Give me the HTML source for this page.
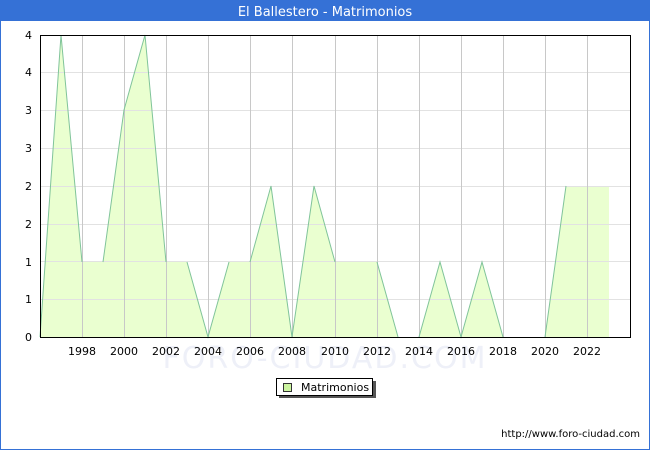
<!DOCTYPE html>
<html><head><meta charset="utf-8"><style>
body{margin:0;width:650px;height:450px;overflow:hidden;background:#fff;font-family:"DejaVu Sans","Liberation Sans",sans-serif}
</style></head><body>
<svg width="650" height="450" xmlns="http://www.w3.org/2000/svg" font-family="DejaVu Sans, Liberation Sans, sans-serif">
<rect x="0.5" y="0.5" width="649" height="449" fill="#fff" stroke="#3571d6"/>
<rect x="0" y="0" width="650" height="21" fill="#3571d6"/>
<text x="325" y="16" font-size="13" fill="#fff" text-anchor="middle">El Ballestero - Matrimonios</text>
<text x="325" y="368" font-size="30" fill="#eef0f8" text-anchor="middle" letter-spacing="2">FORO-CIUDAD.COM</text>
<polygon fill="#eaffd0" points="40,337 61,35 82,262 103,262 124,110 145,35 166,262 187,262 208,337 229,262 250,262 271,186 292,337 314,186 335,262 356,262 377,262 398,337 419,337 440,262 461,337 482,262 503,337 524,337 545,337 566,186 587,186 609,186 609,337"/>
<g stroke="#e2e2e2" stroke-width="1">
<line x1="40" y1="72.5" x2="630" y2="72.5"/><line x1="40" y1="110.5" x2="630" y2="110.5"/><line x1="40" y1="148.5" x2="630" y2="148.5"/><line x1="40" y1="186.5" x2="630" y2="186.5"/><line x1="40" y1="224.5" x2="630" y2="224.5"/><line x1="40" y1="261.5" x2="630" y2="261.5"/><line x1="40" y1="299.5" x2="630" y2="299.5"/>
</g>
<g stroke="#c8c8c8" stroke-width="1">
<line x1="82.5" y1="35" x2="82.5" y2="337"/><line x1="124.5" y1="35" x2="124.5" y2="337"/><line x1="166.5" y1="35" x2="166.5" y2="337"/><line x1="208.5" y1="35" x2="208.5" y2="337"/><line x1="250.5" y1="35" x2="250.5" y2="337"/><line x1="292.5" y1="35" x2="292.5" y2="337"/><line x1="335.5" y1="35" x2="335.5" y2="337"/><line x1="377.5" y1="35" x2="377.5" y2="337"/><line x1="419.5" y1="35" x2="419.5" y2="337"/><line x1="461.5" y1="35" x2="461.5" y2="337"/><line x1="503.5" y1="35" x2="503.5" y2="337"/><line x1="545.5" y1="35" x2="545.5" y2="337"/><line x1="587.5" y1="35" x2="587.5" y2="337"/>
</g>
<path fill="none" stroke="#80c49a" stroke-width="1" d="M40,337L61,35L82,262 M103,262L124,110L145,35L166,262 M187,262L208,337L229,262 M250,262L271,186L292,337L314,186L335,262 M377,262L398,337 M419,337L440,262L461,337L482,262L503,337 M545,337L566,186"/>
<rect x="40.5" y="35.5" width="590" height="302" fill="none" stroke="#000"/>
<g font-size="11" fill="#000" text-anchor="end">
<text x="32" y="341">0</text><text x="32" y="303">1</text><text x="32" y="266">1</text><text x="32" y="228">2</text><text x="32" y="190">2</text><text x="32" y="152">3</text><text x="32" y="114">3</text><text x="32" y="76">4</text><text x="32" y="39">4</text>
</g>
<g font-size="11" fill="#000" text-anchor="middle">
<text x="82" y="355">1998</text><text x="124" y="355">2000</text><text x="166" y="355">2002</text><text x="208" y="355">2004</text><text x="250" y="355">2006</text><text x="292" y="355">2008</text><text x="335" y="355">2010</text><text x="377" y="355">2012</text><text x="419" y="355">2014</text><text x="461" y="355">2016</text><text x="503" y="355">2018</text><text x="545" y="355">2020</text><text x="587" y="355">2022</text>
</g>
<rect x="279" y="381" width="97" height="17" fill="#555"/>
<rect x="276.5" y="378.5" width="96" height="17" fill="#fff" stroke="#000"/>
<rect x="283.5" y="383.5" width="8" height="8" fill="#ccf5a0" stroke="#333"/>
<text x="301" y="391" font-size="11" fill="#000">Matrimonios</text>
<text x="640" y="437" font-size="10" fill="#000" text-anchor="end">http://www.foro-ciudad.com</text>
</svg>
</body></html>
